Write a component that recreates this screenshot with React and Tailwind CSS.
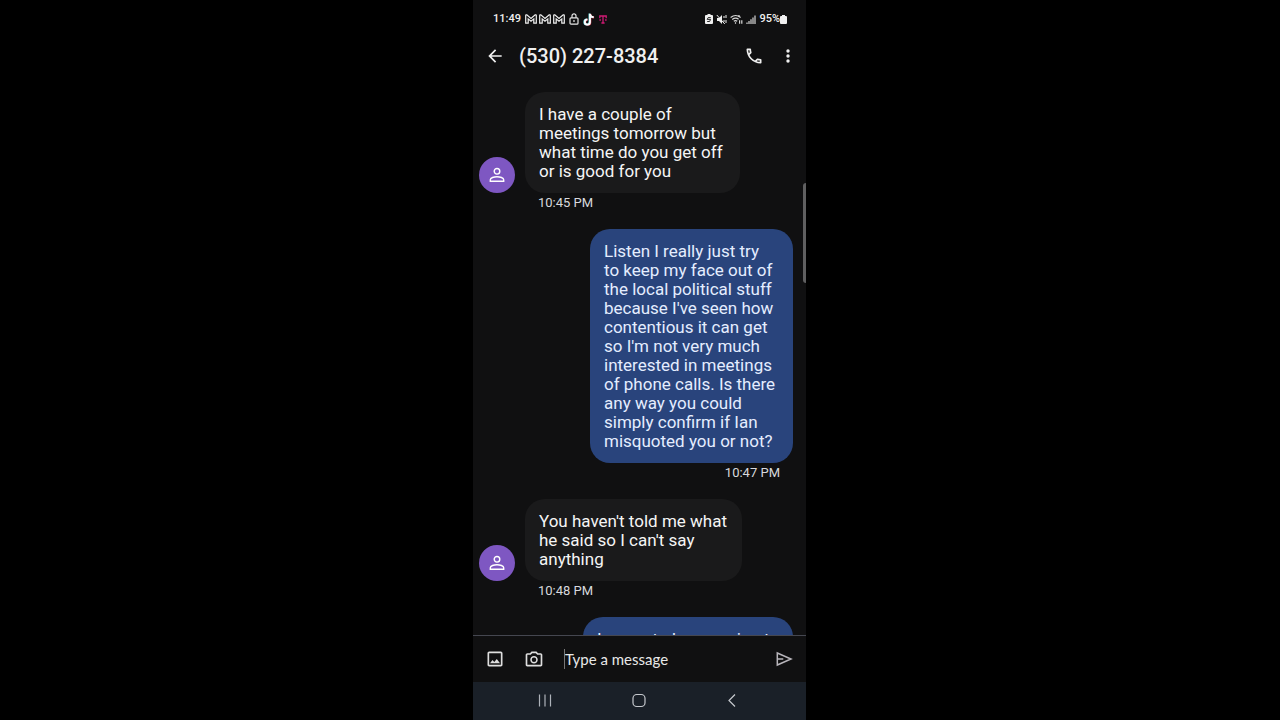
import React from 'react';

const messages = [
  {
    id: 1,
    lines: ['I have a couple of', 'meetings tomorrow but', 'what time do you get off', 'or is good for you'],
    time: '10:45 PM',
    sent: false,
    width: 'w-[215px]'
  },
  {
    id: 2,
    lines: [
      'Listen I really just try',
      'to keep my face out of',
      'the local political stuff',
      "because I've seen how",
      'contentious it can get',
      "so I'm not very much",
      'interested in meetings',
      'of phone calls. Is there',
      'any way you could',
      'simply confirm if Ian',
      'misquoted you or not?'
    ],
    time: '10:47 PM',
    sent: true,
    width: 'w-[203px]'
  },
  {
    id: 3,
    lines: ["You haven't told me what", "he said so I can't say", 'anything'],
    time: '10:48 PM',
    sent: false,
    width: 'w-[217px]'
  },
  {
    id: 4,
    lines: ['I mean to be assuring to'],
    time: '10:49 PM',
    sent: true,
    width: 'w-[210px]'
  }
];

const MailIcon = () => (
  <svg viewBox="0 0 12 10" className="w-3 h-[10px]" fill="none" stroke="#f0f0f0" strokeWidth="1.2">
    <path d="M.7 9.2V1.5Q.8.6 1.8.9L6 4.4 10.2.9Q11.2.6 11.3 1.5V9.2H8.8V4.9L6 7.2 3.2 4.9V9.2Z" />
  </svg>
);

const StatusBar = () => (
  <div className="flex items-center justify-between h-[38px] pl-5 pr-[19px] text-[11px] leading-4 font-medium text-[#f0f0f0]">
    <div className="flex items-center gap-0.5">
      <span className="mr-0.5">11:49</span>
      <MailIcon />
      <MailIcon />
      <MailIcon />
      <svg viewBox="0 0 10 12" className="w-[10px] h-3 ml-0.5" fill="none" stroke="#e8e8e8" strokeWidth="1.2">
        <rect x="1" y="4.8" width="8" height="6.4" rx="1" />
        <path d="M3 4.8V2.8a2 2 0 0 1 4 0v2M5 7v2" />
      </svg>
      <svg viewBox="0 0 12 13" className="w-3 h-[13px] ml-0.5" fill="none" strokeWidth="1.8">
        <path d="M7 .7V9a2.6 2.6 0 1 1-2.6-2.6M7 1q.3 3 3.7 3.2" stroke="#e64860" transform="translate(.4 .3)" />
        <path d="M7 .7V9a2.6 2.6 0 1 1-2.6-2.6M7 1q.3 3 3.7 3.2" stroke="#6fd5dd" transform="translate(-.6 -.1)" />
        <path d="M7 .7V9a2.6 2.6 0 1 1-2.6-2.6M7 1q.3 3 3.7 3.2" stroke="#fff" />
      </svg>
      <svg viewBox="0 0 8 9" className="w-2 h-[9px] ml-0.5" fill="none" stroke="#d01a74" strokeWidth="1.3">
        <path d="M.8 3.2V1h6.4v2.2M4 1v7M2.4 8h3.2M.4 5h1.5M6.1 5h1.5" />
      </svg>
    </div>
    <div className="flex items-center gap-[3px]">
      <svg viewBox="0 0 8 10" className="w-2 h-[10px]" fill="#f0f0f0">
        <path d="M2.5 0h3v1H7q1 0 1 1v7q0 1-1 1H1Q0 10 0 9V2q0-1 1-1h1.5Z" />
        <path d="M5.8 3.6H3.2L2.2 5.4h3.400L4.600 7.500H2.200" stroke="#111" strokeWidth=".9" fill="none" />
      </svg>
      <svg viewBox="0 0 11 11" className="w-[11px] h-[11px]" fill="#f0f0f0" stroke="#f0f0f0">
        <path d="M1 4h2l3-3v9L3 7H1Z" stroke="none" />
        <path d="m.8 1 8 9M8 2v2M8 6v2M10 1v3M10 6v3" fill="none" />
      </svg>
      <svg viewBox="0 0 13 11" className="w-[13px] h-[11px]" fill="none" stroke="#d8d8d8" strokeWidth="1.2">
        <path d="M.6 3.5q5-4 10 0M2.2 5.4q3.400-2.600 6.400-.2M3.800 7.300q1.800-1.300 3.400 0" />
        <path d="M5.500 8.200v1.600M9.600 6.300v3.500M11.800 6.300v3.500M9 1v2" />
      </svg>
      <svg viewBox="0 0 10 9" className="w-[10px] h-[9px]" fill="none" stroke="#c8c8c8" strokeWidth="1.3">
        <path d="M1 9V7.5M3 9V6M5 9V4.3M7 9V2.5M9 9V.5" />
      </svg>
      <div className="flex items-center">
        <span>95%</span>
        <svg viewBox="0 0 7 9" className="w-[7px] h-[9px]" fill="#f0f0f0">
          <path d="M2 0h3v1h1q1 0 1 1v6q0 1-1 1H1Q0 9 0 8V2q0-1 1-1h1Z" />
        </svg>
      </div>
    </div>
  </div>
);

const Header = () => (
  <header className="flex items-center h-9 pl-3 pr-2 text-[#f0f0f0]">
    <button type="button" aria-label="Back" className="w-5 h-5">
      <svg viewBox="0 0 24 24" className="w-5 h-5" fill="currentColor">
        <path d="M20 11H7.83l5.59-5.59L12 4l-8 8 8 8 1.410-1.410L7.830 13H20v-2z" />
      </svg>
    </button>
    <h1 className="flex-1 ml-[14px] text-[20px] leading-7 font-medium whitespace-nowrap">(530) 227-8384</h1>
    <button type="button" aria-label="Call" className="w-5 h-5">
      <svg viewBox="0 0 24 24" className="w-5 h-5" fill="currentColor">
        <path d="M6.540 5c.06.89.21 1.760.45 2.590l-1.200 1.200c-.41-1.200-.67-2.470-.76-3.790h1.510m9.860 12.020c.85.24 1.720.39 2.600.45v1.490c-1.320-.09-2.590-.35-3.800-.75l1.200-1.190M7.500 3H4c-.55 0-1 .45-1 1 0 9.390 7.610 17 17 17 .55 0 1-.45 1-1v-3.490c0-.55-.45-1-1-1-1.240 0-2.450-.2-3.570-.57-.1-.04-.21-.05-.31-.05-.26 0-.51.1-.71.29l-2.200 2.200c-2.830-1.450-5.150-3.760-6.590-6.590l2.200-2.200c.28-.28.36-.67.25-1.020C8.700 6.450 8.500 5.250 8.500 4c0-.55-.45-1-1-1z" />
      </svg>
    </button>
    <button type="button" aria-label="More options" className="w-5 h-5 ml-[14px]">
      <svg viewBox="0 0 20 20" className="w-5 h-5" fill="currentColor">
        <circle cx="10" cy="5" r="1.700" />
        <circle cx="10" cy="10" r="1.700" />
        <circle cx="10" cy="15" r="1.700" />
      </svg>
    </button>
  </header>
);

const Avatar = () => (
  <div className="flex items-center justify-center shrink-0 w-9 h-9 rounded-full bg-[#7e57c2]">
    <svg viewBox="0 0 16 16" className="w-4 h-4" fill="none" stroke="#fff" strokeWidth="1.4">
      <circle cx="8" cy="4.300" r="2.800" />
      <path d="M1.300 14.300v-1.600c0-1.900 3.800-3 6.700-3s6.700 1.100 6.700 3v1.600z" />
    </svg>
  </div>
);

const Message = ({ message }) => (
  <div className={`flex flex-col mb-4 ${message.sent ? 'items-end pr-[13px]' : 'items-start pl-1.5'}`}>
    <div className="flex items-end gap-[10px]">
      {!message.sent && <Avatar />}
      <div
        className={`${message.width} pt-[13px] pb-3 pl-[14px] rounded-[20px] text-[17px] leading-[19px] whitespace-pre ${
          message.sent ? 'bg-[#29447c] text-[#e4edff]' : 'bg-[#1a1a1b] text-[#f5f5f5]'
        }`}
      >
        {message.lines.join('\n')}
      </div>
    </div>
    <time className={`text-[13px] leading-5 text-[#d8d9dd] ${message.sent ? 'pr-[13px]' : 'pl-[59px]'}`}>
      {message.time}
    </time>
  </div>
);

const Composer = () => (
  <form className="flex items-center h-[47px] shrink-0 pl-3 pr-[13px] border-t border-[#454750] text-[#dedede]">
    <button type="button" aria-label="Attach photo" className="w-5 h-5">
      <svg viewBox="0 0 24 24" className="w-5 h-5" fill="currentColor">
        <path d="M19 5v14H5V5h14m0-2H5c-1.100 0-2 .9-2 2v14c0 1.100.9 2 2 2h14c1.100 0 2-.9 2-2V5c0-1.100-.9-2-2-2zm-4.860 8.860-3 3.870L9 13.140 6 17h12l-3.860-5.140z" />
      </svg>
    </button>
    <button type="button" aria-label="Open camera" className="w-5 h-5 ml-[19px]">
      <svg viewBox="0 0 24 24" className="w-5 h-5" fill="currentColor">
        <path d="M20 5h-3.170L15 3H9L7.170 5H4c-1.100 0-2 .9-2 2v12c0 1.100.9 2 2 2h16c1.100 0 2-.9 2-2V7c0-1.100-.9-2-2-2zm0 14H4V7h4.050l1.830-2h4.240l1.830 2H20v12zM12 8.500c-2.500 0-4.500 2-4.500 4.500s2 4.500 4.500 4.500 4.500-2 4.500-4.500-2-4.500-4.500-4.500zm0 7.200a2.700 2.700 0 1 1 0-5.400 2.700 2.700 0 0 1 0 5.400z" />
      </svg>
    </button>
    <input
      type="text"
      aria-label="Message"
      placeholder="Type a message"
      className="flex-1 min-w-0 h-5 ml-5 border-l border-[#777] bg-transparent font-['Lato',sans-serif] text-[15px] leading-5 placeholder:text-[#e8e8e8] outline-none"
    />
    <button type="button" aria-label="Send" className="w-[18px] h-[18px]">
      <svg viewBox="0 0 18 18" className="w-[18px] h-[18px]" fill="none" stroke="#b8b5bb" strokeWidth="1.5">
        <path d="M2.300 3 16 9 2.300 15V3ZM2.300 9h6" />
      </svg>
    </button>
  </form>
);

const NavBar = () => (
  <nav className="flex items-center justify-between h-[38px] shrink-0 pl-[62px] pr-16 bg-[#1a2028]">
    <button type="button" aria-label="Recent apps" className="w-5 h-5">
      <svg viewBox="0 0 20 20" className="w-5 h-5" fill="none" stroke="#aeb3ba" strokeWidth="1.2">
        <path d="M4.500 3.500v12M10 3.500v12M15.500 3.500v12" />
      </svg>
    </button>
    <button type="button" aria-label="Home" className="w-5 h-5">
      <svg viewBox="0 0 20 20" className="w-5 h-5" fill="none" stroke="#c6c9ce" strokeWidth="1.2">
        <rect x="4" y="3.500" width="12" height="12" rx="3.800" />
      </svg>
    </button>
    <button type="button" aria-label="Navigate back" className="w-5 h-5">
      <svg viewBox="0 0 20 20" className="w-5 h-5" fill="none" stroke="#c6c9ce" strokeWidth="1.2">
        <path d="m13 3.500-6 6 6 6" />
      </svg>
    </button>
  </nav>
);

const App = () => (
  <div className="flex justify-center h-screen pr-px bg-black">
    <main className="relative flex flex-col h-full aspect-[37/80] overflow-hidden bg-[#101011] font-['Roboto',sans-serif]">
      <StatusBar />
      <Header />
      <section className="flex-1 min-h-0 mt-[18px] overflow-hidden">
        {messages.map((message) => (
          <Message key={message.id} message={message} />
        ))}
      </section>
      <Composer />
      <NavBar />
      <div className="absolute right-0 top-[183px] w-[3px] h-[100px] rounded-l bg-[#5f5f60]" />
    </main>
  </div>
);

export default App;
